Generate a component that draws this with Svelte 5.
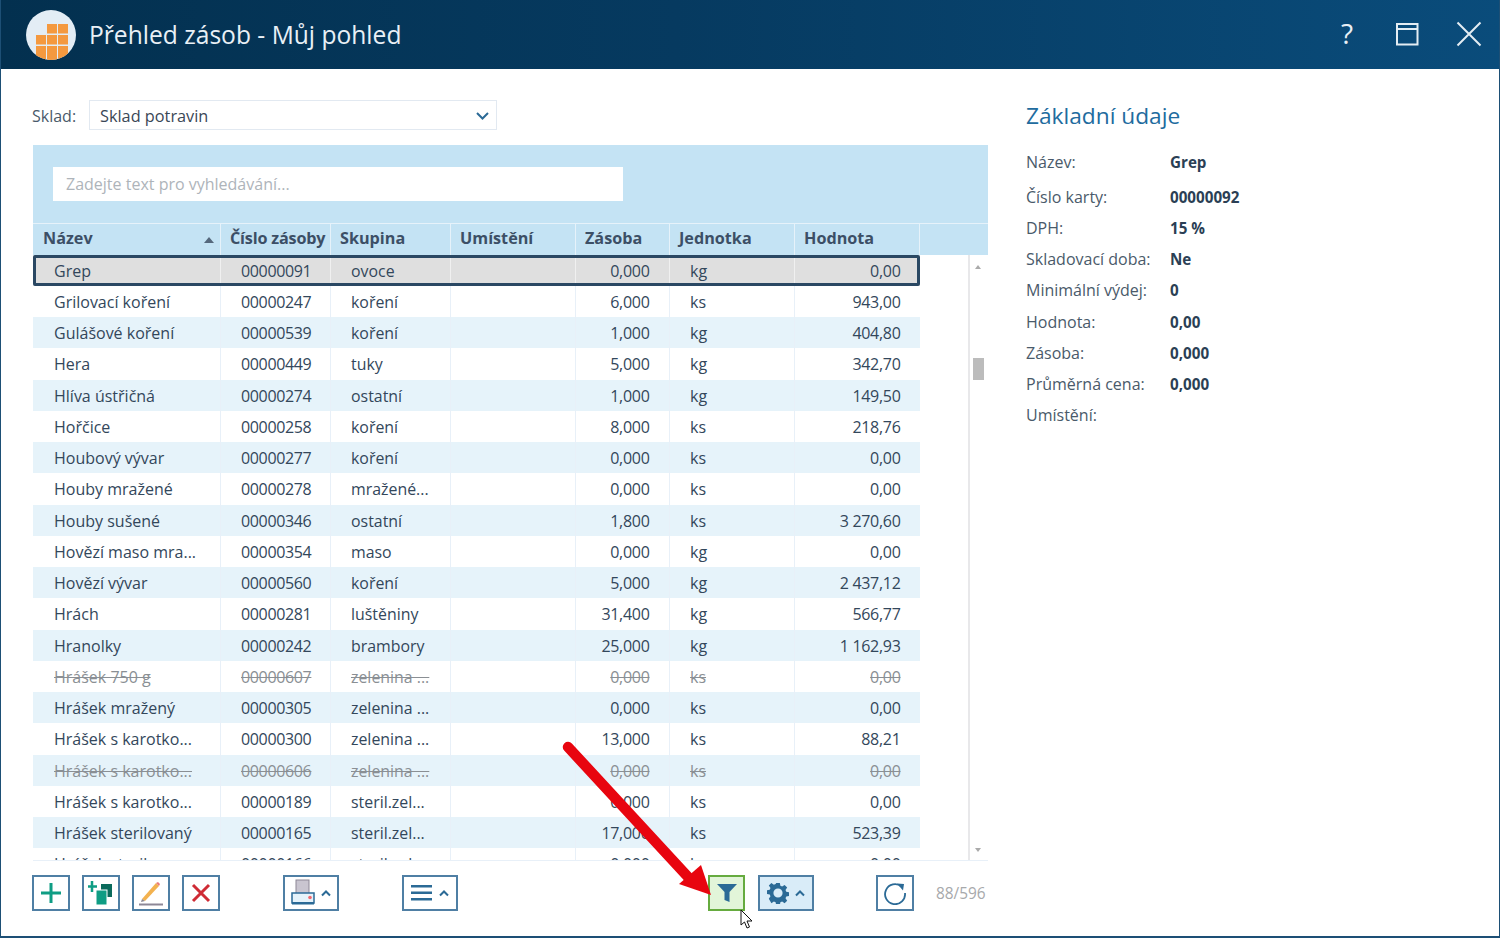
<script>
  const columns = [
    { label: 'Název', cls: 'name' },
    { label: 'Číslo zásoby', cls: 'code' },
    { label: 'Skupina', cls: 'group' },
    { label: 'Umístění', cls: 'place' },
    { label: 'Zásoba', cls: 'stock' },
    { label: 'Jednotka', cls: 'unit' },
    { label: 'Hodnota', cls: 'value' }
  ];
  const rows = [
    ['Grep','00000091','ovoce','0,000','kg','0,00'],
    ['Grilovací koření','00000247','koření','6,000','ks','943,00'],
    ['Gulášové koření','00000539','koření','1,000','kg','404,80'],
    ['Hera','00000449','tuky','5,000','kg','342,70'],
    ['Hlíva ústřičná','00000274','ostatní','1,000','kg','149,50'],
    ['Hořčice','00000258','koření','8,000','ks','218,76'],
    ['Houbový vývar','00000277','koření','0,000','ks','0,00'],
    ['Houby mražené','00000278','mražené...','0,000','ks','0,00'],
    ['Houby sušené','00000346','ostatní','1,800','ks','3 270,60'],
    ['Hovězí maso mra...','00000354','maso','0,000','kg','0,00'],
    ['Hovězí vývar','00000560','koření','5,000','kg','2 437,12'],
    ['Hrách','00000281','luštěniny','31,400','kg','566,77'],
    ['Hranolky','00000242','brambory','25,000','kg','1 162,93'],
    ['Hrášek 750 g','00000607','zelenina ...','0,000','ks','0,00',true],
    ['Hrášek mražený','00000305','zelenina ...','0,000','ks','0,00'],
    ['Hrášek s karotko...','00000300','zelenina ...','13,000','ks','88,21'],
    ['Hrášek s karotko...','00000606','zelenina ...','0,000','ks','0,00',true],
    ['Hrášek s karotko...','00000189','steril.zel...','0,000','ks','0,00'],
    ['Hrášek sterilovaný','00000165','steril.zel...','17,000','ks','523,39'],
    ['Hrášek sterilov...','00000166','steril.zel...','0,000','ks','0,00']
  ];
  const details = [
    ['Název:', 'Grep'],
    ['Číslo karty:', '00000092'],
    ['DPH:', '15 %'],
    ['Skladovací doba:', 'Ne'],
    ['Minimální výdej:', '0'],
    ['Hodnota:', '0,00'],
    ['Zásoba:', '0,000'],
    ['Průměrná cena:', '0,000'],
    ['Umístění:', '']
  ];
</script>

<div class="window">
  <header class="titlebar">
    <div class="logo">
      <svg width="50" height="50" viewBox="0 0 50 50">
        <circle cx="25" cy="25" r="25" fill="#e3edf5"/>
        <clipPath id="lc"><circle cx="25" cy="25" r="25"/></clipPath>
        <g clip-path="url(#lc)" fill="#f4993f">
          <rect x="21" y="14" width="10" height="9.5"/><rect x="32" y="14" width="10" height="9.5"/>
          <rect x="10" y="25" width="10" height="9.5"/><rect x="21" y="25" width="10" height="9.5"/><rect x="32" y="25" width="10" height="9.5"/>
          <rect x="10" y="36" width="10" height="14"/><rect x="21" y="36" width="10" height="14"/><rect x="32" y="36" width="10" height="14"/>
        </g>
      </svg>
    </div>
    <h1>Přehled zásob - Můj pohled</h1>
    <div class="winctl">
      <span class="help">?</span>
      <svg class="maxi" width="24" height="24" viewBox="0 0 24 24" fill="none" stroke="#e4edf3" stroke-width="2"><rect x="2" y="2" width="20.500" height="20.500"/><path d="M2 7h20.500"/></svg>
      <svg class="close" width="26" height="26" viewBox="0 0 26 26" fill="none" stroke="#e4edf3" stroke-width="2"><path d="M1.500 1.500l23 23M24.500 1.500l-23 23"/></svg>
    </div>
  </header>

  <main class="content">
    <section class="left">
      <div class="store">
        <span class="store-label">Sklad:</span>
        <div class="select">
          <span>Sklad potravin</span>
          <svg width="13" height="8" viewBox="0 0 13 8" fill="none" stroke="#2b6a96" stroke-width="2"><path d="M1 1l5.500 5.500L12 1"/></svg>
        </div>
      </div>

      <div class="grid-box">
        <div class="search-band">
          <div class="search">Zadejte text pro vyhledávání...</div>
        </div>
        <div class="head">
          {#each columns as c, i}
            <div class="hcell {c.cls}">
              {c.label}
              {#if i === 0}<span class="sort"></span>{/if}
            </div>
          {/each}
          <div class="hfill"></div>
        </div>
        <div class="body-wrap">
          <div class="rows">
            {#each rows as r, i}
              <div class="row" class:alt={i % 2 === 0 && i > 0} class:sel={i === 0} class:dead={r[6]}>
                <div class="cell name">{r[0]}</div>
                <div class="cell code">{r[1]}</div>
                <div class="cell group">{r[2]}</div>
                <div class="cell place"></div>
                <div class="cell stock num">{r[3]}</div>
                <div class="cell unit">{r[4]}</div>
                <div class="cell value num">{r[5]}</div>
              </div>
            {/each}
          </div>
          <div class="scrollbar">
            <span class="up"></span>
            <span class="thumb"></span>
            <span class="down"></span>
          </div>
        </div>
      </div>

      <div class="toolbar">
        <button class="btn sq" aria-label="Přidat">
          <svg width="24" height="24" viewBox="0 0 24 24" fill="none" stroke="#0f9d84" stroke-width="3"><path d="M12 2v20M2 12h20"/></svg>
        </button>
        <button class="btn sq" aria-label="Kopírovat">
          <svg width="26" height="26" viewBox="0 0 26 26"><path d="M4 1v11M0 6.500h9" stroke="#0f9d84" stroke-width="2.500" fill="none"/><path d="M13 4h11v13h-11z" fill="#0b6b5c"/><rect x="8" y="10" width="11" height="15" fill="#0f9d84" stroke="#fff"/></svg>
        </button>
        <button class="btn sq" aria-label="Upravit">
          <svg width="26" height="26" viewBox="0 0 26 26"><path d="M4 19L18 3l3 3L7 21z" fill="#f3b24f"/><path d="M18 3l2-1 2 2-1 2z" fill="#ea7a7a"/><path d="M4 19l-1 3 4-1z" fill="#8a8590"/><path d="M1 24.500h24" stroke="#8d8796" stroke-width="2"/></svg>
        </button>
        <button class="btn sq" aria-label="Smazat">
          <svg width="20" height="20" viewBox="0 0 20 20" fill="none" stroke="#cf2b35" stroke-width="3"><path d="M2 2l16 16M18 2L2 18"/></svg>
        </button>
        <button class="btn wide print" aria-label="Tisk">
          <svg width="24" height="28" viewBox="0 0 24 28"><rect x="5" y="1" width="13" height="15" fill="#c9c5d0" stroke="#8d8796"/><rect x="1" y="14" width="22" height="10" fill="#e5f2fa" stroke="#2b6a96" stroke-width="1.500"/><rect x="1" y="23" width="22" height="2.500" fill="#2b6a96"/><circle cx="19" cy="18.500" r="1.800" fill="#f2686f"/></svg>
          <svg class="caret" width="10" height="7" viewBox="0 0 10 7" fill="none" stroke="#2b6a96" stroke-width="2"><path d="M1 5.500l4-4 4 4"/></svg>
        </button>
        <button class="btn wide menu" aria-label="Menu">
          <svg width="22" height="16" viewBox="0 0 22 16" fill="#2b6a96"><rect width="21" height="2.500"/><rect y="6.500" width="21" height="2.500"/><rect y="13" width="21" height="2.500"/></svg>
          <svg class="caret" width="10" height="7" viewBox="0 0 10 7" fill="none" stroke="#2b6a96" stroke-width="2"><path d="M1 5.500l4-4 4 4"/></svg>
        </button>
        <button class="btn filter" aria-label="Filtr">
          <svg width="22" height="20" viewBox="0 0 22 20"><path d="M1 1h20l-7.500 8v10l-5-2V9z" fill="#2b6a96"/></svg>
        </button>
        <button class="btn wide gear" aria-label="Nastavení">
          <svg width="22" height="22" viewBox="0 0 24 24" fill="#2b6a96"><path fill-rule="evenodd" d="M10 1h4l.6 3.200 1.900.8L19.200 3.200l2.800 2.800-1.800 2.700.8 1.900 3 .6v4l-3 .6-.8 1.900 1.800 2.700-2.800 2.800-2.700-1.800-1.900.8-.6 3h-4l-.6-3-1.900-.8-2.700 1.800L2 18.200l1.800-2.700-.8-1.900-3-.6v-4l3-.6.8-1.900L2 3.800 4.800 1 7.500 3l1.900-.8zM12 7a5 5 0 100 10 5 5 0 000-10z"/></svg>
          <svg class="caret" width="10" height="7" viewBox="0 0 10 7" fill="none" stroke="#2b6a96" stroke-width="2"><path d="M1 5.500l4-4 4 4"/></svg>
        </button>
        <button class="btn sq refresh" aria-label="Obnovit">
          <svg width="24" height="24" viewBox="0 0 24 24" fill="none"><path d="M18.500 5.500A10 10 0 1 0 22 12" stroke="#2b6a96" stroke-width="1.800"/><path d="M14 2.500l7 .5-1 6.500z" fill="#2b6a96"/></svg>
        </button>
        <span class="count">88/596</span>
      </div>
    </section>

    <aside class="detail">
      <h2>Základní údaje</h2>
      <dl>
        {#each details as d}
          <div class="drow"><dt>{d[0]}</dt><dd>{d[1]}</dd></div>
        {/each}
      </dl>
    </aside>
  </main>

  <svg class="arrow" width="200" height="180" viewBox="0 0 200 180">
    <path d="M7 7L128 138" stroke="#e8050f" stroke-width="10.500" stroke-linecap="round" fill="none"/>
    <path d="M118 144L140 125 150 155z" fill="#e8050f"/>
  </svg>
  <svg class="pointer" width="14" height="20" viewBox="0 0 14 20"><path d="M1 1v15l3.500-3 2.500 6 2.500-1-2.500-6H12z" fill="#fff" stroke="#111" stroke-width="1"/></svg>
</div>

<style>
  :global(body) { margin: 0; background: #fff; }
  .window {
    position: relative;
    width: 1500px;
    height: 938px;
    box-sizing: border-box;
    border: 1px solid #1d4f75;
    border-top: 0;
    border-bottom-width: 2px;
    background: #fff;
    font-family: "Open Sans", "Noto Sans", sans-serif;
    font-size: 16px;
    color: #33475b;
    overflow: hidden;
  }
  .titlebar {
    height: 69px;
    margin: 0 -1px;
    display: flex;
    align-items: center;
    padding-left: 26px;
    padding-right: 18px;
    background: linear-gradient(90deg, #03304f 0%, #063a60 45%, #0a4c7b 100%);
    color: #e8eff5;
  }
  .logo { width: 50px; height: 50px; margin-right: 13px; }
  h1 { margin: 0 0 1px; font-size: 24.6px; font-weight: 400; color: #e9f0f6; }
  .winctl { margin: 0 0 2px auto; display: flex; align-items: center; }
  .help { font-size: 28px; margin: 0 42px 1px 0; }
  .maxi { margin-right: 37px; }
  .content { display: flex; height: 867px; box-sizing: border-box; padding: 31px 0 0 31px; }
  .left { width: 956px; flex: none; }
  .store { display: flex; align-items: center; height: 30px; }
  .store-label { width: 57px; color: #4a5a6a; padding-top: 1px; }
  .select {
    box-sizing: border-box;
    width: 408px;
    height: 30px;
    border: 1px solid #e2e9f1;
    display: flex;
    align-items: center;
    justify-content: space-between;
    padding: 1px 7px 0 10px;
    color: #3a4756;
    font-size: 16.3px;
  }
  .grid-box { margin: 15px 0 0 1px; width: 955px; height: 716px; display: flex; flex-direction: column; overflow: hidden; border-bottom: 1px solid #e8f0f8; box-sizing: border-box; }
  .search-band { height: 78px; flex: none; background: #c4e3f4; box-sizing: border-box; padding: 22px 20px; }
  .search { width: 570px; height: 34px; box-sizing: border-box; background: #fff; color: #aeb4ba; padding: 0 13px; display: flex; align-items: center; font-size: 16px; }
  .head { display: flex; height: 32px; flex: none; background: #c4e3f4; font-weight: 700; color: #3c4f66; border-top: 1px solid #e6f2fa; box-sizing: border-box; }
  .hcell { position: relative; box-sizing: border-box; padding-left: 10px; line-height: 28px; border-right: 1px solid #e6f2fa; white-space: nowrap; font-size: 16.2px; flex: none; }
  .hfill { flex: 1; }
  .sort { position: absolute; right: 6px; top: 13px; border: 5px solid transparent; border-top: 0; border-bottom: 6px solid #55687c; }
  .name { width: 188px; }
  .code { width: 110px; }
  .group { width: 120px; }
  .place { width: 125px; }
  .stock { width: 94px; }
  .unit { width: 125px; }
  .value { width: 125px; }
  .hcell.code { padding-left: 9px; letter-spacing: -0.2px; }
  .hcell.group, .hcell.place, .hcell.stock, .hcell.unit, .hcell.value { padding-left: 9px; }
  .body-wrap { flex: 1; min-height: 0; display: flex; }
  .rows { width: 887px; flex: none; margin: -0.3px 48px 0 0; }
  .row { display: flex; height: 31.25px; box-sizing: border-box; background: #fff; }
  .row.alt { background: #e6f3fa; }
  .row.sel { background: #dfdfdf; outline: 3px solid #2a4863; outline-offset: -3px; border-radius: 2px; }
  .row.dead .cell { color: #8a8f94; text-decoration: line-through; }
  .cell { box-sizing: border-box; line-height: 32px; padding-left: 21px; border-right: 1px solid #e8f0f8; white-space: nowrap; overflow: hidden; flex: none; }
  .row.sel .cell { border-right-color: #f0f0f0; }
  .cell.code { padding-left: 20px; letter-spacing: -0.35px; }
  .cell.group { padding-left: 20px; font-size: 15.9px; }
  .cell.unit { padding-left: 20px; }
  .cell.num { text-align: right; padding: 0 19.500px 0 0; letter-spacing: -0.3px; }
  .cell.value { border-right: 0; }
  .scrollbar { width: 20px; flex: none; background: #fff; border-left: 2px solid #e8e8ea; box-sizing: border-box; position: relative; }
  .up, .down { position: absolute; left: 5px; border: 3.500px solid transparent; }
  .up { top: 10px; border-top: 0; border-bottom: 4px solid #aaa; }
  .down { bottom: 8px; border-bottom: 0; border-top: 4px solid #aaa; }
  .thumb { position: absolute; left: 3px; top: 103px; width: 11px; height: 22px; background: #bcbcbc; }
  .toolbar { display: flex; align-items: center; height: 36px; margin: 14px 0 0 0; }
  .btn { box-sizing: border-box; height: 36px; padding: 0; background: #fff; border: 2px solid #4f7fa4; display: flex; align-items: center; justify-content: center; flex: none; }
  .sq { width: 38px; margin-right: 12px; }
  .wide { width: 56px; gap: 6px; }
  .print { margin-left: 51px; }
  .menu { margin-left: 63px; }
  .filter { width: 37px; margin: 0 13px 0 250px; background: #e2f5d9; border-color: #66ab3f; }
  .gear { background: #d9ecf8; margin-right: 62px; }
  .refresh { margin-right: 22px; }
  .count { color: #a7a9ab; font-size: 15.4px; }
  .detail { margin-left: 38px; flex: 1; }
  h2 { margin: 0; font-size: 22.7px; font-weight: 400; color: #216b9e; line-height: 32px; }
  dl { margin: 14.7px 0 0; }
  .drow { display: flex; height: 31.25px; line-height: 31px; font-size: 16px; }
  .drow:first-child { height: 35px; }
  dt { width: 144px; color: #4a5a6a; }
  dd { margin: 0; font-weight: 700; color: #2b3f55; font-size: 15.2px; }
  .arrow { position: absolute; left: 560px; top: 740px; }
  .pointer { position: absolute; left: 739px; top: 909px; }
</style>
